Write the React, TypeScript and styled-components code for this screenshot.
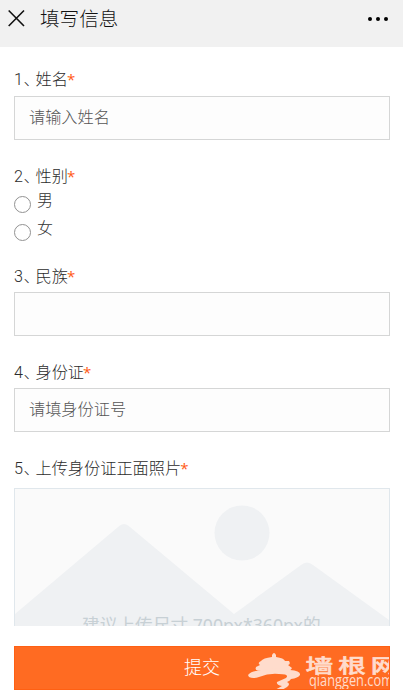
import React from 'react';
import styled, { createGlobalStyle } from 'styled-components';

const GlobalStyle = createGlobalStyle`
  * { box-sizing: border-box; }
  body { margin: 0; background: #fff; }
`;
const Page = styled.div`
  height: 694px;
  overflow: hidden;
  display: flex;
  flex-direction: column;
  font-family: Roboto, "Noto Sans CJK SC", sans-serif;
  font-weight: 300;
  color: #333;
`;
const Header = styled.header`
  height: 47px;
  flex: none;
  background: #f1f1f1;
  display: flex;
  align-items: flex-start;
  padding: 9px 14px 0 8px;
`;
const CloseIcon = styled.svg`
  width: 17px;
  height: 18px;
  flex: none;
`;
const Title = styled.h1`
  margin: 1px auto 0 15px;
  font-size: 19.6px;
  line-height: 20px;
  font-weight: 300;
  color: #111;
`;
const MoreIcon = styled.svg`
  width: 22px;
  height: 6px;
  margin-top: 7px;
`;
const Form = styled.form`
  display: flex;
  flex-direction: column;
  padding: 0 13px 0 14px;
`;
const Field = styled.section<{ $top: number }>`
  display: flex;
  flex-direction: column;
  margin-top: ${(p) => p.$top}px;
`;
const Label = styled.div<{ $gap?: number }>`
  display: flex;
  height: 20px;
  margin-bottom: ${(p) => p.$gap ?? 5}px;
  font-size: 16.2px;
  line-height: 20px;
  color: #2c2c2c;
`;
const Num = styled.span`
  width: 21.5px;
  letter-spacing: 0.4px;
  white-space: nowrap;
`;
const Star = styled.span`
  color: #ff5a14;
  font-family: "Open Sans", sans-serif;
  font-weight: 400;
  font-size: 15px;
  line-height: 18px;
  margin-left: -1px;
`;
const Input = styled.input`
  width: 376px;
  height: 44px;
  padding: 0 14px 2px;
  border: 1px solid #d5d6d6;
  border-radius: 0;
  background: #fdfdfd;
  font: inherit;
  font-size: 16.2px;
  outline: 0;
  &::placeholder { color: #555; opacity: 1; }
`;
const Option = styled.label`
  display: flex;
  height: 28px;
  gap: 6px;
  font-size: 16px;
  line-height: 20px;
`;
const Radio = styled.span`
  width: 17px;
  height: 17px;
  margin-top: 5px;
  border: 1px solid #929292;
  border-radius: 50%;
`;
const Upload = styled.div`
  width: 376px;
  height: 138px;
  position: relative;
  overflow: hidden;
  border: 1px solid #e0e7ec;
  border-bottom: 0;
  background: #fafafa;
`;
const Scenery = styled.svg`
  display: block;
  width: 374px;
  height: 137px;
`;
const Hint = styled.div`
  position: absolute;
  left: 67px;
  top: 124px;
  font-family: "Noto Sans", "Noto Sans CJK SC", sans-serif;
  font-weight: 400;
  font-size: 17.7px;
  line-height: 24px;
  white-space: nowrap;
  color: #c7d0d5;
`;
const Submit = styled.button`
  position: relative;
  width: 376px;
  height: 44px;
  margin-top: 20px;
  padding: 0;
  border: 1px solid #ff6013;
  overflow: hidden;
  background: #ff6b22;
  color: #fff;
  font: inherit;
  font-size: 18px;
  line-height: 40px;
`;
const Watermark = styled.svg`
  position: absolute;
  left: 233px;
  top: -1px;
  width: 160px;
  height: 48px;
`;

type QuestionProps = { top: number; num: number; text: string; gap?: number; children: React.ReactNode };

function Question({ top, num, text, gap, children }: QuestionProps) {
  return (
    <Field $top={top}>
      <Label $gap={gap}><Num>{num}、</Num>{text}<Star>*</Star></Label>
      {children}
    </Field>
  );
}

export default function App() {
  return (
    <Page>
      <GlobalStyle />
      <Header>
        <CloseIcon viewBox="0 0 17 18"><path d="M.7 1.5 16 17M16 1.5.7 17" stroke="#111" strokeWidth="1.6" /></CloseIcon>
        <Title>填写信息</Title>
        <MoreIcon viewBox="0 0 22 6"><circle cx="3" cy="3" r="2" /><circle cx="11" cy="3" r="2" /><circle cx="19" cy="3" r="2" /></MoreIcon>
      </Header>
      <Form>
        <Question top={23} num={1} text="姓名" gap={6}><Input placeholder="请输入姓名" /></Question>
        <Question top={27} num={2} text="性别" gap={4}>
          <Option><Radio />男</Option>
          <Option><Radio />女</Option>
        </Question>
        <Question top={20} num={3} text="民族"><Input /></Question>
        <Question top={27} num={4} text="身份证"><Input placeholder="请填身份证号" /></Question>
        <Question top={27} num={5} text="上传身份证正面照片" gap={9}>
          <Upload>
            <Scenery viewBox="0 0 374 137">
              <path d="M0 125 103 38Q109 32 115 38L219 125 286 76Q292 71 298 76L374 131V138H0Z" fill="#eff1f3" />
              <circle cx="227" cy="44" r="27.5" fill="#eff1f3" />
            </Scenery>
            <Hint>建议上传尺寸 700px*360px的</Hint>
          </Upload>
        </Question>
        <Submit type="button">
          提交
          <Watermark viewBox="0 0 160 48" fill="#ffdccc">
            <path d="M24 11 24 9Q26 5 28 9L28 11Q36 12 37 15H41Q43 18 40 19L44 22Q42 26 35 25H13Q6 25 8 21L12 19Q9 17 13 15Q15 12 24 11Z" />
            <path d="M0 29Q4 24 13 25Q28 20 42 24Q53 25 52 29Q50 32 43 33Q42 35 39 36Q43 38 39 41L29 47 25 45 34 40Q28 39 29 36L38 32Q42 28 31 28Q21 27 11 31Q5 33 1 31Z" />
            <g transform="translate(57.5 26.5) scale(1.42 1)" stroke="#ffdccc" strokeWidth="0.5" strokeLinejoin="round">
              <text fontFamily="Noto Sans CJK SC" fontSize="19.5" fontWeight="500" letterSpacing="3.5">墙根网</text>
            </g>
            <text x="61" y="39.5" fontFamily="Open Sans" fontSize="15.5" fontWeight="500" textLength="84" lengthAdjust="spacingAndGlyphs">qianggen.com</text>
          </Watermark>
        </Submit>
      </Form>
    </Page>
  );
}
